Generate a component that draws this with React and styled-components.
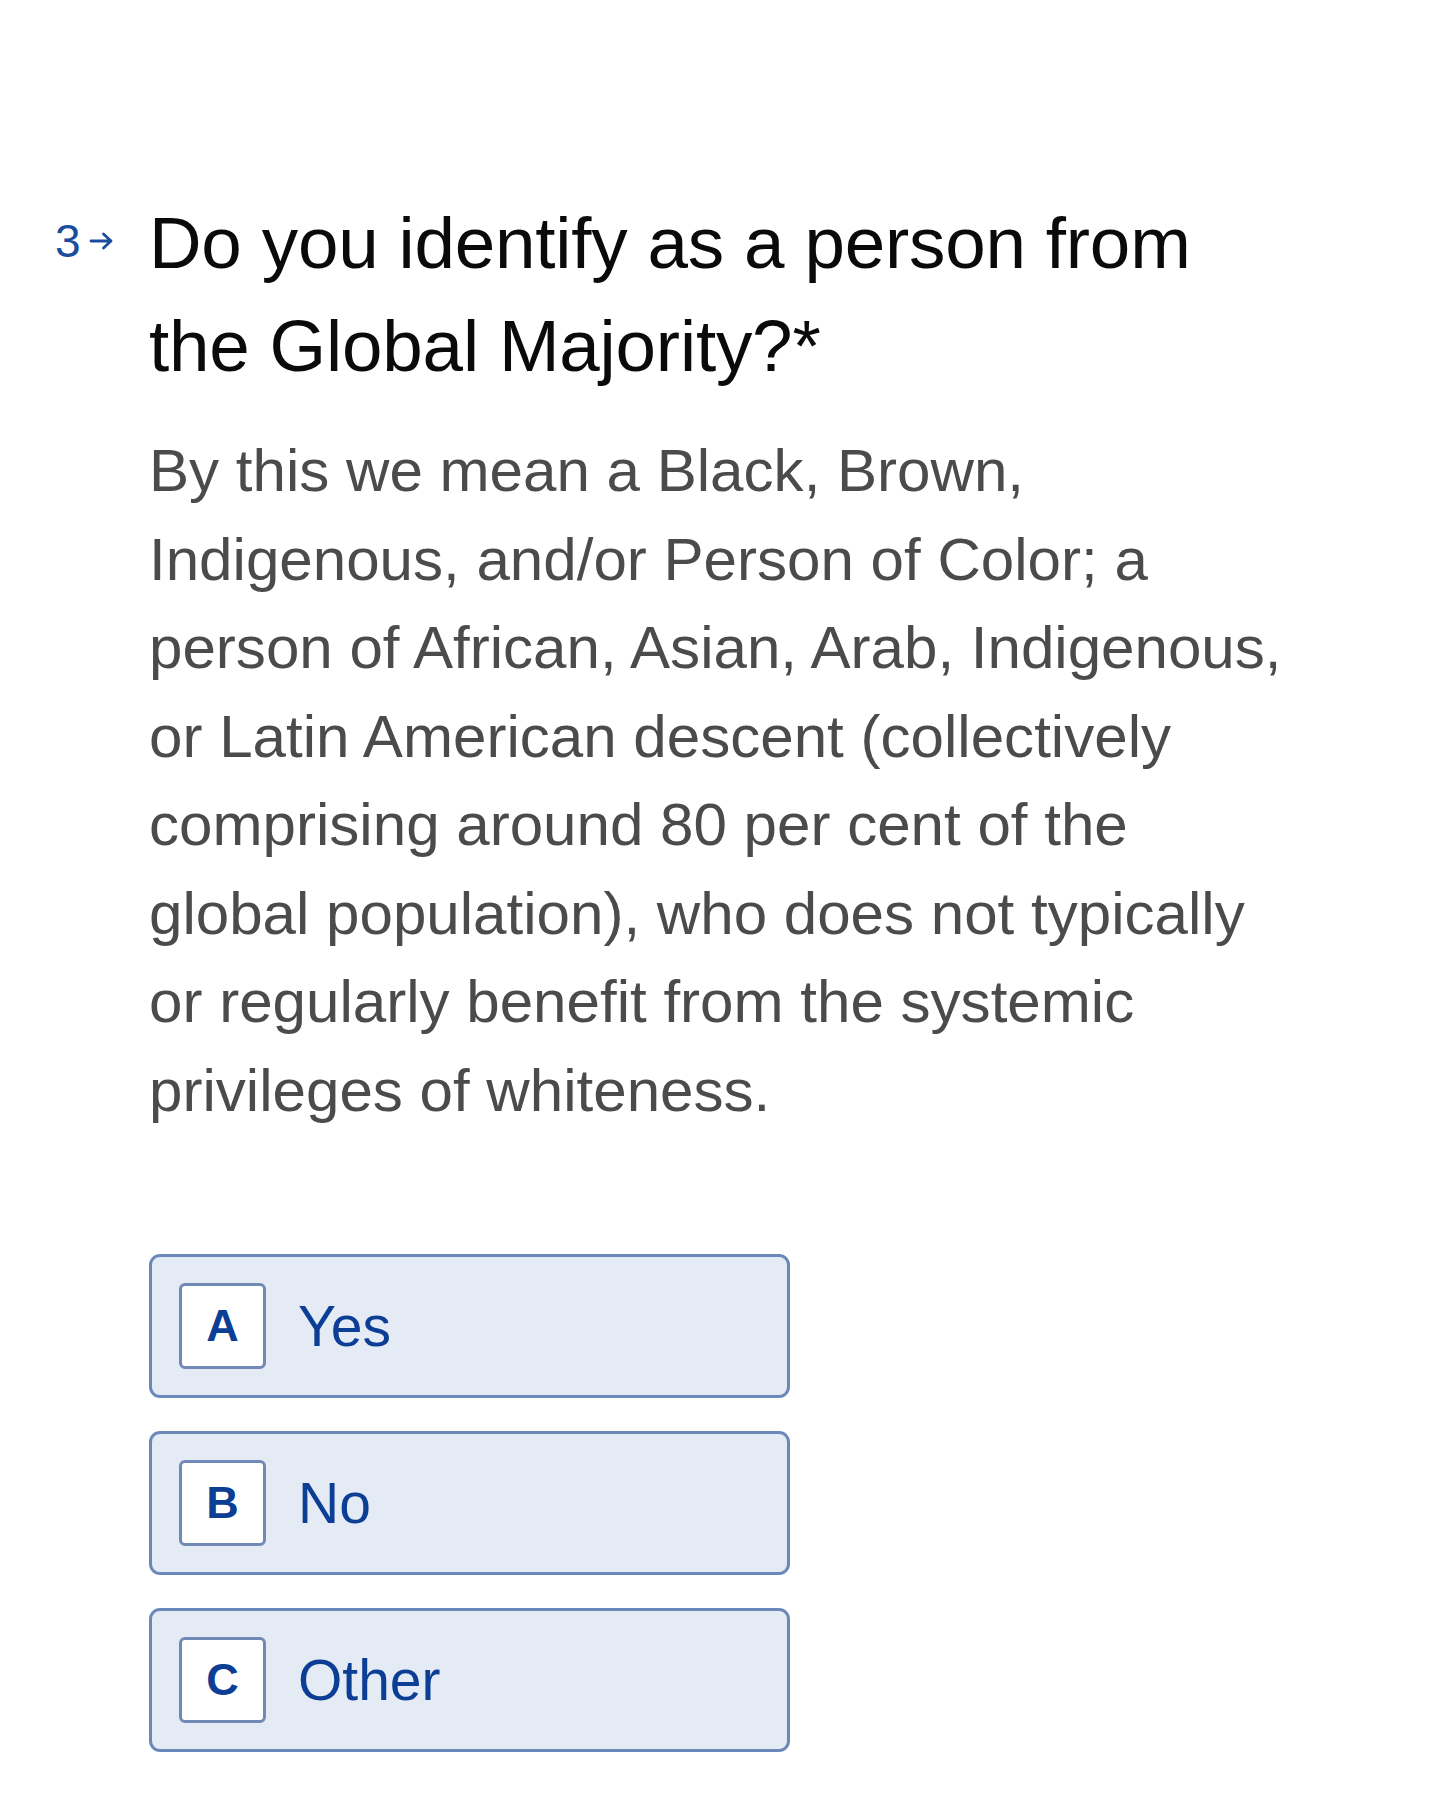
import React from 'react';
import styled, { createGlobalStyle } from 'styled-components';

const GlobalStyle = createGlobalStyle`
  html, body {
    margin: 0;
    padding: 0;
    background: #fff;
  }
  body {
    font-family: "Liberation Sans", Arial, Helvetica, sans-serif;
    -webkit-font-smoothing: antialiased;
  }
`;

const Page = styled.div`
  min-height: 1800px;
  background: #fff;
  padding: 191px 0 0 55px;
  box-sizing: border-box;
`;

const Question = styled.div`
  display: flex;
  align-items: flex-start;
`;

const Counter = styled.div`
  width: 94px;
  flex: 0 0 94px;
  display: flex;
  align-items: center;
  gap: 8px;
  margin-top: 27px;
  color: #1b4d9f;
  font-size: 46px;
  line-height: 46px;
`;

const Body = styled.div`
  display: flex;
  flex-direction: column;
`;

const Title = styled.h1`
  margin: 0;
  font-size: 72.8px;
  line-height: 103px;
  font-weight: 400;
  color: #0a0a0a;
  white-space: nowrap;
  letter-spacing: -0.2px;
`;

const Description = styled.p`
  margin: 30px 0 0;
  font-size: 60.1px;
  line-height: 88.5px;
  color: #4b4b4b;
  white-space: nowrap;
`;

const Options = styled.div`
  display: flex;
  flex-direction: column;
  gap: 33px;
  margin-top: 119px;
  width: 641px;
`;

const Choice = styled.div`
  display: flex;
  align-items: center;
  height: 144px;
  box-sizing: border-box;
  padding-left: 27px;
  gap: 32px;
  background: #e5ebf5;
  border: 3px solid #6a88ba;
  border-radius: 11px;
  cursor: pointer;
`;

const Key = styled.span`
  width: 87px;
  height: 86px;
  box-sizing: border-box;
  display: flex;
  align-items: center;
  justify-content: center;
  background: #fff;
  border: 3px solid #7189b5;
  border-radius: 6px;
  color: #0c3e95;
  font-size: 45px;
  font-weight: 700;
`;

const Label = styled.span`
  color: #0c3e95;
  font-size: 57px;
  line-height: 1;
`;

const Arrow = () => (
  <svg width="25" height="22" viewBox="0 0 25 22" fill="none">
    <path d="M2 11h20M14.5 4 22 11l-7.5 7" stroke="#1b4d9f" strokeWidth="2.8" strokeLinecap="round" strokeLinejoin="round" />
  </svg>
);

const description = [
  'By this we mean a Black, Brown,',
  'Indigenous, and/or Person of Color; a',
  'person of African, Asian, Arab, Indigenous,',
  'or Latin American descent (collectively',
  'comprising around 80 per cent of the',
  'global population), who does not typically',
  'or regularly benefit from the systemic',
  'privileges of whiteness.',
];

const choices = [
  { key: 'A', label: 'Yes' },
  { key: 'B', label: 'No' },
  { key: 'C', label: 'Other' },
];

export default function App() {
  return (
    <Page>
      <GlobalStyle />
      <Question>
        <Counter>
          <span>3</span>
          <Arrow />
        </Counter>
        <Body>
          <Title>
            Do you identify as a person from
            <br />
            the Global Majority?*
          </Title>
          <Description>
            {description.map((line, i) => (
              <React.Fragment key={i}>
                {line}
                {i < description.length - 1 && <br />}
              </React.Fragment>
            ))}
          </Description>
          <Options>
            {choices.map((c) => (
              <Choice key={c.key}>
                <Key>{c.key}</Key>
                <Label>{c.label}</Label>
              </Choice>
            ))}
          </Options>
        </Body>
      </Question>
    </Page>
  );
}
